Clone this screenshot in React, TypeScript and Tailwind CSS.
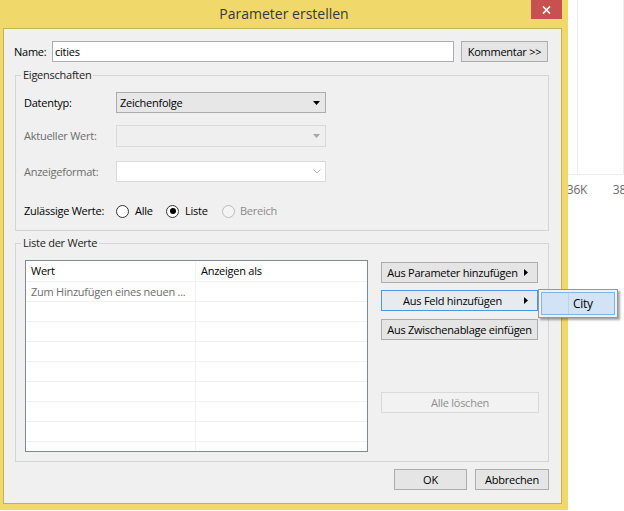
import React from "react";

function DropArrow({ color = "#000000" }: { color?: string }) {
  return (
    <svg width="7" height="4" viewBox="0 0 7 4" className="shrink-0">
      <polygon points="0,0 7,0 3.5,4" fill={color} />
    </svg>
  );
}

function RightArrow() {
  return (
    <svg width="4" height="7" viewBox="0 0 4 7" className="shrink-0">
      <polygon points="0,0 4,3.5 0,7" fill="#000000" />
    </svg>
  );
}

function Radio({ checked = false, disabled = false }: { checked?: boolean; disabled?: boolean }) {
  return (
    <span
      className={
        disabled
          ? "flex h-[13px] w-[13px] shrink-0 items-center justify-center rounded-full border border-[#bcbcbc] bg-[#f4f4f4]"
          : "flex h-[13px] w-[13px] shrink-0 items-center justify-center rounded-full border border-[#333333] bg-white"
      }
    >
      {checked ? <span className="h-[6px] w-[6px] rounded-full bg-black" /> : null}
    </span>
  );
}

const btn =
  "flex h-[21px] items-center justify-center border border-[#adadad] bg-[#e5e5e5] leading-[19px] text-black";

function Dialog() {
  return (
    <div className="flex h-[510px] w-[568px] shrink-0 flex-col bg-[#f1d86b]">
      {/* title bar */}
      <div className="grid h-[28px] grid-cols-[1fr_auto_1fr] items-start">
        <div />
        <div className="pt-[4px] text-[14px] leading-[20px] tracking-normal text-[#383838]">Parameter erstellen</div>
        <div className="flex justify-end pr-[6px]">
          <button type="button" className="flex h-[19px] w-[31px] items-center justify-center bg-[#c75050]">
            <svg width="9" height="8" viewBox="0 0 9 8">
              <path d="M1 0.5 L8 7.5 M8 0.5 L1 7.5" stroke="#ffffff" strokeWidth="1.6" />
            </svg>
          </button>
        </div>
      </div>

      {/* client */}
      <div className="mb-[6px] ml-[3px] mr-[6px] flex-1 border border-[#c7b057] bg-[#f0f0f0] pl-[10px] pt-[12px]">
        <div className="w-[535px]">
          {/* name row */}
          <div className="flex h-[21px] items-center">
            <span className="w-[38px] leading-[16px]">Name:</span>
            <div className="flex h-[21px] w-[402px] items-center border border-[#abadb3] bg-white pl-[2px] leading-[16px]">
              cities
            </div>
            <button type="button" className={`${btn} ml-[7px] w-[87px]`}>
              Kommentar &gt;&gt;
            </button>
          </div>

          {/* Eigenschaften */}
          <fieldset className="ml-[1px] mt-[5px] w-[534px] border border-[#d5d5d5] px-[8px] pb-[11px]">
            <legend className="ml-[-3px] px-[2px] leading-[16px] text-[#222222]">Eigenschaften</legend>

            <div className="mt-[9px] flex h-[21px] items-center">
              <span className="w-[92px] leading-[16px]">Datentyp:</span>
              <div className="flex h-[21px] w-[210px] items-center justify-between border border-[#acacac] bg-[#e7e7e7] pl-[3px] pr-[5px] leading-[16px]">
                <span>Zeichenfolge</span>
                <DropArrow />
              </div>
            </div>

            <div className="mt-[12px] flex h-[22px] items-center">
              <span className="w-[92px] leading-[16px] text-[#6d6d6d]">Aktueller Wert:</span>
              <div className="flex h-[22px] w-[210px] items-center justify-end border border-[#d9d9d9] bg-[#efefef] pr-[5px]">
                <DropArrow color="#a6a6a6" />
              </div>
            </div>

            <div className="mt-[14px] flex h-[21px] items-center">
              <span className="w-[92px] leading-[16px] text-[#6d6d6d]">Anzeigeformat:</span>
              <div className="flex h-[21px] w-[210px] items-center justify-end border border-[#d9d9d9] bg-white pr-[4px]">
                <svg width="8" height="5" viewBox="0 0 8 5">
                  <path d="M0.5 0.5 L4 4 L7.5 0.5" stroke="#b5b5b5" strokeWidth="1" fill="none" />
                </svg>
              </div>
            </div>

            <div className="mt-[21px] flex h-[16px] items-center leading-[16px]">
              <span className="w-[92px]">Zulässige Werte:</span>
              <span className="flex w-[50px] items-center">
                <Radio />
                <span className="ml-[6px]">Alle</span>
              </span>
              <span className="flex w-[56px] items-center">
                <Radio checked />
                <span className="ml-[6px]">Liste</span>
              </span>
              <span className="flex items-center">
                <Radio disabled />
                <span className="ml-[5px] text-[#8a8a8a]">Bereich</span>
              </span>
            </div>
          </fieldset>

          {/* Liste der Werte */}
          <fieldset className="ml-[1px] mt-[4px] w-[534px] border border-[#d5d5d5] px-[8px] pb-[9px]">
            <legend className="ml-[-3px] px-[2px] leading-[16px] text-[#222222]">Liste der Werte</legend>

            <div className="mt-[9px] flex items-start">
              <div className="ml-[1px] h-[192px] w-[343px] overflow-hidden border border-[#828790] bg-white">
                <div className="flex h-[21px] border-b border-[#f0f0f0] leading-[20px]">
                  <div className="w-[170px] border-r border-[#f0f0f0] pl-[5px]">Wert</div>
                  <div className="flex-1 pl-[5px]">Anzeigen als</div>
                </div>
                {Array.from({ length: 9 }).map((_, i) => (
                  <div key={i} className="flex h-[20px] border-b border-[#f0f0f0] leading-[19px]">
                    <div className="w-[170px] border-r border-[#f0f0f0] pl-[5px] text-[#6d6d6d]">
                      {i === 0 ? "Zum Hinzufügen eines neuen ..." : ""}
                    </div>
                    <div className="flex-1" />
                  </div>
                ))}
              </div>

              <div className="ml-[13px] mt-[2px] flex w-[157px] flex-col">
                <button type="button" className={`${btn} w-full`}>
                  <span className="flex-1 pl-[2px] text-center">Aus Parameter hinzufügen</span>
                  <span className="flex w-[16px] justify-start pl-[3px]">
                    <RightArrow />
                  </span>
                </button>
                <button
                  type="button"
                  className="mt-[7px] flex h-[21px] w-full items-center border border-[#4d95df] bg-[#e6ebf0] leading-[19px]"
                >
                  <span className="flex-1 pl-[2px] text-center">Aus Feld hinzufügen</span>
                  <span className="flex w-[16px] justify-start pl-[3px]">
                    <RightArrow />
                  </span>
                </button>
                <button type="button" className={`${btn} mt-[8px] w-full`}>
                  Aus Zwischenablage einfügen
                </button>
                <button
                  type="button"
                  className="mt-[52px] flex h-[21px] w-[158px] items-center justify-center border border-[#d9d9d9] bg-[#f2f2f2] leading-[19px] text-[#8d8d8d]"
                >
                  Alle löschen
                </button>
              </div>
            </div>
          </fieldset>

          {/* bottom buttons */}
          <div className="mt-[7px] flex justify-end gap-[8px]">
            <button type="button" className={`${btn} w-[73px]`}>
              OK
            </button>
            <button type="button" className={`${btn} w-[74px]`}>
              Abbrechen
            </button>
          </div>
        </div>
      </div>
    </div>
  );
}

function ChartStrip() {
  return (
    <div className="flex-1 overflow-hidden bg-white">
      <svg width="56" height="511" viewBox="0 0 56 511">
        <line x1="9.5" y1="0" x2="9.5" y2="174" stroke="#ececec" />
        <line x1="55.5" y1="0" x2="55.5" y2="174" stroke="#ececec" />
        <line x1="0" y1="174.5" x2="56" y2="174.5" stroke="#ececec" />
        <text x="9" y="194" textAnchor="middle" fontSize="12" fill="#6b6b6b" fontFamily="Open Sans, sans-serif">
          36K
        </text>
        <text x="55" y="194" textAnchor="middle" fontSize="12" fill="#6b6b6b" fontFamily="Open Sans, sans-serif">
          38K
        </text>
      </svg>
    </div>
  );
}

function CityMenu() {
  return (
    <div className="absolute left-[538px] top-[289px] h-[29px] w-[80px] border border-[#979797] bg-[#f0f0f0] p-[2px] shadow-[2px_2px_2px_rgba(0,0,0,0.35)]">
      <div className="flex h-[23px] border border-[#7eb4ea] bg-[#d1e3f5]">
        <div className="w-[27px] border-r border-[#bcd3ea]" />
        <div className="pl-[4px] text-[12px] leading-[21px]">City</div>
      </div>
    </div>
  );
}

export default function App() {
  return (
    <div className="relative flex h-[511px] w-[624px] overflow-hidden bg-white font-['Open_Sans',sans-serif] text-[11px] tracking-[-0.25px] text-black">
      <Dialog />
      <ChartStrip />
      <CityMenu />
    </div>
  );
}
